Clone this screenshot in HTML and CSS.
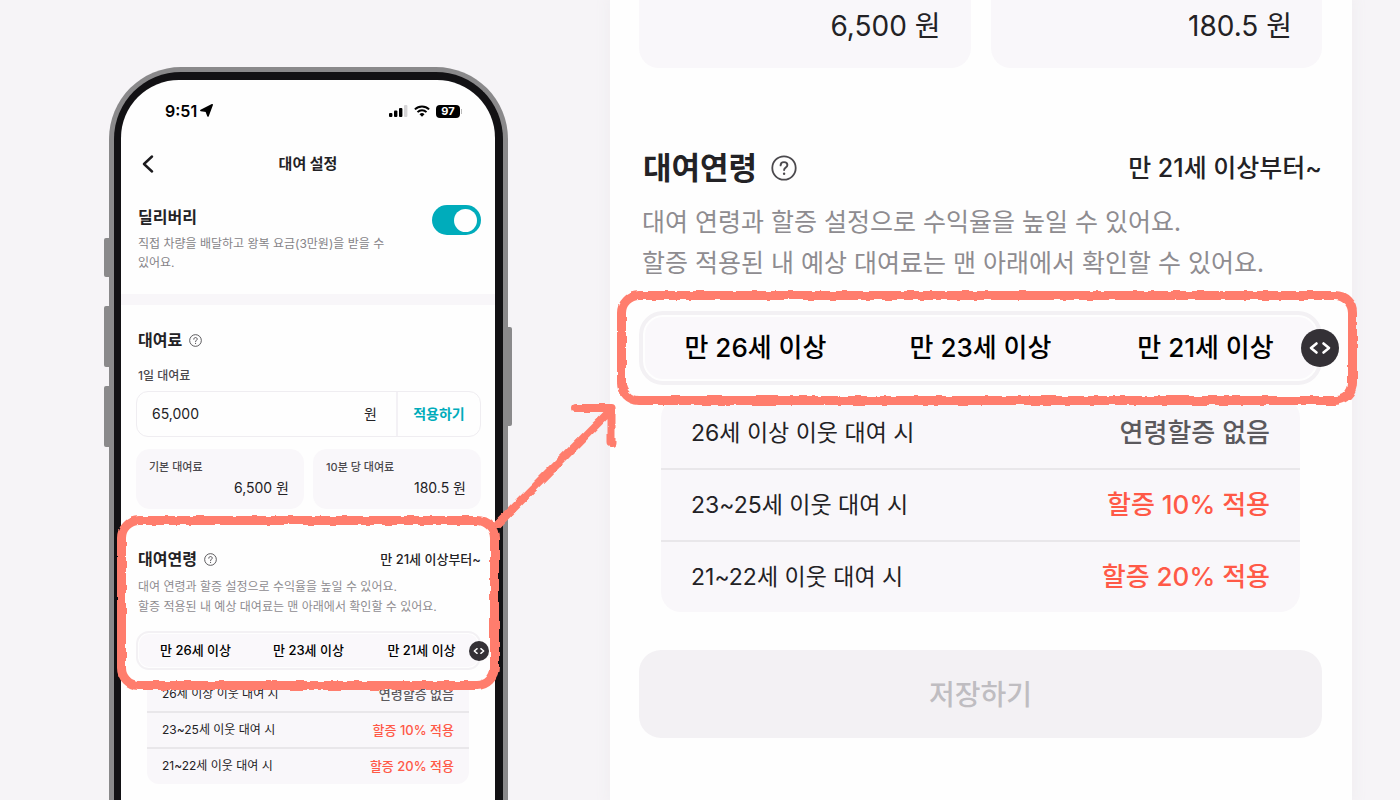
FILE: index.html
```html
<!DOCTYPE html>
<html lang="ko">
<head>
<meta charset="utf-8">
<meta name="viewport" content="width=device-width, initial-scale=1">
<title>대여 설정</title>
<link rel="stylesheet" href="styles.css">
</head>
<body>
<svg class="defs" aria-hidden="true">
  <filter id="rough" x="-5%" y="-5%" width="110%" height="110%" color-interpolation-filters="sRGB">
    <feTurbulence type="fractalNoise" baseFrequency="0.09" numOctaves="2" seed="4"/>
    <feDisplacementMap in="SourceGraphic" scale="4" xChannelSelector="R" yChannelSelector="G"/>
  </filter>
  <symbol id="help" viewBox="0 0 26 26">
    <circle cx="13" cy="13" r="11.7" fill="none" stroke="currentColor" stroke-width="1.8"/>
    <path d="M9.6 10.4c0-2.1 1.5-3.3 3.4-3.3s3.4 1.2 3.4 3c0 2.400-3.300 2.500-3.300 5" fill="none" stroke="currentColor" stroke-width="1.900" stroke-linecap="round"/>
    <circle cx="13.100" cy="18.700" r="1.200" fill="currentColor"/>
  </symbol>
</svg>

<main class="scene">
  <section class="phone">
    <i class="key key-mute"></i><i class="key key-up"></i><i class="key key-down"></i><i class="key key-power"></i>
    <div class="screen">
      <div class="status">
        <div class="status-time">9:51
          <svg width="13" height="13" viewBox="0 0 13 13"><path d="M12.200.8 8 12 6.200 7.300.9 6.500Z" fill="#000" stroke="#000" stroke-width="1.600" stroke-linejoin="round"/></svg>
        </div>
        <div class="status-icons">
          <svg width="19" height="12" viewBox="0 0 19 12"><rect x="0" y="8" width="3.400" height="4" rx="1"/><rect x="5" y="5.500" width="3.400" height="6.500" rx="1"/><rect x="10" y="3" width="3.400" height="9" rx="1"/><rect x="15" y="0" width="3.400" height="12" rx="1" fill="#d5d4d6"/></svg>
          <svg width="16" height="12" viewBox="0 0 16 12"><g fill="none" stroke="#000" stroke-width="2"><path d="M.9 4.400a10.200 10.200 0 0 1 14.200 0"/><path d="M3.500 7.100a6.500 6.500 0 0 1 9 0"/></g><path d="M8 11.800 5.500 9.200a3.600 3.600 0 0 1 5 0Z"/></svg>
          <span class="battery">97</span>
        </div>
      </div>
      <header class="nav">
        <button class="back" aria-label="뒤로"><svg width="12" height="18" viewBox="0 0 12 18"><path d="M10 1.500 2 9l8 7.500" fill="none" stroke="#1b1a1d" stroke-width="2.400" stroke-linecap="round" stroke-linejoin="round"/></svg></button>
        <h1>대여 설정</h1>
      </header>

      <section class="delivery">
        <div>
          <h2><label for="delivery">딜리버리</label></h2>
          <p>직접 차량을 배달하고 왕복 요금(3만원)을 받을 수 있어요.</p>
        </div>
        <input class="toggle" type="checkbox" id="delivery" checked>
      </section>

      <section class="fee">
        <h2>대여료 <svg class="help"><use href="#help"/></svg></h2>
        <label class="fee-label" for="daily">1일 대여료</label>
        <div class="fee-field">
          <input id="daily" type="text" value="65,000"><span class="unit">원</span>
          <button>적용하기</button>
        </div>
        <div class="cards">
          <div class="card"><span>기본 대여료</span><strong>6,500 원</strong></div>
          <div class="card"><span>10분 당 대여료</span><strong>180.5 원</strong></div>
        </div>
      </section>

      <section class="age">
        <div class="age-head">
          <h2>대여연령 <svg class="help"><use href="#help"/></svg></h2>
          <span class="age-from">만 21세 이상부터~</span>
        </div>
        <p class="age-desc">대여 연령과 할증 설정으로 수익율을 높일 수 있어요.<br>할증 적용된 내 예상 대여료는 맨 아래에서 확인할 수 있어요.</p>
        <div class="slider">
          <span>만 26세 이상</span><span>만 23세 이상</span><span>만 21세 이상</span>
          <input type="range" min="0" max="2" value="2" aria-label="대여연령">
        </div>
        <i class="mark"></i>
      </section>

      <table class="rates">
        <tr><th scope="row">26세 이상 이웃 대여 시</th><td>연령할증 없음</td></tr>
        <tr><th scope="row">23~25세 이웃 대여 시</th><td class="extra">할증 10% 적용</td></tr>
        <tr><th scope="row">21~22세 이웃 대여 시</th><td class="extra">할증 20% 적용</td></tr>
      </table>
    </div>
  </section>

  <section class="detail">
    <div class="cards">
      <div class="card"><strong>6,500 원</strong></div>
      <div class="card"><strong>180.5 원</strong></div>
    </div>
    <section class="age">
      <div class="age-head">
        <h2>대여연령 <svg class="help"><use href="#help"/></svg></h2>
        <span class="age-from">만 21세 이상부터~</span>
      </div>
      <p class="age-desc">대여 연령과 할증 설정으로 수익율을 높일 수 있어요.<br>할증 적용된 내 예상 대여료는 맨 아래에서 확인할 수 있어요.</p>
      <div class="slider">
        <span>만 26세 이상</span><span>만 23세 이상</span><span>만 21세 이상</span>
        <input type="range" min="0" max="2" value="2" aria-label="대여연령">
        <i class="mark"></i>
      </div>
    </section>
    <table class="rates">
      <tr><th scope="row">26세 이상 이웃 대여 시</th><td>연령할증 없음</td></tr>
      <tr><th scope="row">23~25세 이웃 대여 시</th><td class="extra">할증 10% 적용</td></tr>
      <tr><th scope="row">21~22세 이웃 대여 시</th><td class="extra">할증 20% 적용</td></tr>
    </table>
    <button class="save" disabled>저장하기</button>
  </section>

  <svg class="arrow" viewBox="0 0 130 134" aria-hidden="true"><path d="M8 126 120 13M86 10h35.500v35" fill="none" stroke="#ff7d6d" stroke-width="8" stroke-linecap="round" stroke-linejoin="round"/></svg>
</main>
</body>
</html>
```
FILE: styles.css
```css
* { box-sizing: border-box; }

body {
  margin: 0;
  background: #f6f4f7;
  color: #232225;
  font-family: Inter, "Noto Sans CJK KR", sans-serif;
  line-height: 1.4;
  -webkit-font-smoothing: antialiased;
}

h1, h2, p { margin: 0; }
button, input { font: inherit; color: inherit; border: 0; padding: 0; background: none; margin: 0; }
.defs { position: absolute; width: 0; height: 0; }

.scene {
  position: relative;
  display: grid;
  grid-template-columns: minmax(0, 399fr) minmax(0, 742fr);
  column-gap: 102px;
  height: 100vh;
  min-height: 800px;
  padding: 0 48px 0 109px;
  overflow: hidden;
}

/* Phone frame */
.phone {
  position: relative;
  margin-top: 67px;
  border: 5px solid #8a898b;
  border-bottom: 0;
  border-radius: 72px 72px 0 0;
  padding: 8px 8px 0 7px;
  background: #121114;
}
.key { position: absolute; width: 5px; left: -10px; background: #8a898b; border-radius: 2px 0 0 2px; }
.key-mute { top: 166px; height: 39px; }
.key-up { top: 234px; height: 61px; }
.key-down { top: 314px; height: 61px; }
.key-power { top: 255px; height: 99px; left: auto; right: -9px; border-radius: 0 2px 2px 0; }
.screen { height: 100%; background: #fefefe; border-radius: 58px 58px 0 0; }

.status {
  display: flex;
  justify-content: space-between;
  align-items: center;
  height: 62px;
  padding: 0 35px 0 44px;
  color: #000;
  font-size: 16px;
  font-weight: 600;
}
.status-time, .status-icons { display: flex; align-items: center; }
.status-time { gap: 3px; }
.status-icons { gap: 6px; }
.battery {
  position: relative;
  width: 24px;
  height: 13px;
  border-radius: 4px;
  background: #000;
  color: #fff;
  font-size: 11px;
  font-weight: 700;
  line-height: 13px;
  text-align: center;
}
.battery::after {
  content: "";
  position: absolute;
  right: -2px;
  top: 4px;
  width: 1px;
  height: 5px;
  background: #bbb;
}

.nav { display: grid; grid-template-columns: 32px 1fr 32px; align-items: center; height: 44px; padding: 0 11px; text-align: center; }
.nav h1 { font-size: 15px; line-height: 24px; font-weight: 700; }
.back { display: grid; place-items: center; height: 32px; }

.screen h2 { display: flex; align-items: center; gap: 7px; padding-left: 2px; font-size: 16px; line-height: 24px; font-weight: 700; }
.help { width: 13px; height: 13px; color: #4b494d; }

.delivery {
  display: flex;
  justify-content: space-between;
  padding: 19px 14px 22px 15px;
  border-bottom: 11px solid #f8f6f9;
}
.delivery p { max-width: 264px; margin-top: 5px; padding-left: 2px; color: #858387; font-size: 12px; line-height: 19px; word-break: keep-all; }
.toggle { appearance: none; flex: none; width: 49px; height: 30px; border-radius: 15px; background: #00acbb; }
.toggle::before { content: ""; display: block; width: 23px; height: 23px; margin: 4px 0 0 22px; border-radius: 50%; background: #fefefe; }

.fee { padding: 23px 14px 0 15px; }
.fee-label { display: block; margin: 14px 0 5px; padding-left: 2px; font-size: 12px; line-height: 20px; font-weight: 500; color: #4b494d; }
.fee-field { display: flex; align-items: stretch; height: 46px; border: 1px solid #efedf1; border-radius: 12px; font-size: 14px; }
.fee-field input { flex: 1; min-width: 0; padding-left: 15px; }
.unit { align-self: center; padding-right: 19px; }
.fee-field button { width: 84px; border-left: 2px solid #f3f1f5; color: #00acbb; font-weight: 700; }

.cards { display: grid; grid-template-columns: 1fr 1fr; gap: 9px; margin-top: 12px; }
.card { display: flex; flex-direction: column; height: 60px; padding: 9px 15px 0 13px; border-radius: 14px; background: #f9f7fa; }
.card span { font-size: 11px; line-height: 18px; font-weight: 500; color: #4b494d; }
.card strong { align-self: flex-end; font-size: 14px; line-height: 24px; font-weight: 400; }

/* Rental age */
.age { position: relative; z-index: 1; padding: 38px 14px 16px 15px; background: #fefefe; }
.age-head { display: flex; justify-content: space-between; align-items: center; }
.age-from { font-size: 13px; font-weight: 500; }
.age-desc { margin: 6px 0 14px; padding-left: 2px; color: #8e8c90; font-size: 12px; line-height: 20px; white-space: nowrap; }
.slider {
  position: relative;
  display: grid;
  grid-template-columns: repeat(3, 1fr);
  align-items: center;
  height: 39px;
  padding: 0 1px;
  border: 2px solid #f3f1f4;
  border-radius: 13px;
  background: #faf8fb;
  box-shadow: inset 0 0 0 1px #fefefe;
  color: #000;
  font-size: 13px;
  font-weight: 500;
  text-align: center;
}
.slider input { appearance: none; position: absolute; top: 0; bottom: 0; left: -10px; right: -10px; }
.slider input::-webkit-slider-thumb {
  appearance: none;
  width: 20px;
  height: 20px;
  border-radius: 50%;
  background: #343136 url("data:image/svg+xml,%3Csvg xmlns='http://www.w3.org/2000/svg' viewBox='0 0 38 38'%3E%3Cpath d='M15.500 14.500 10 19l5.500 4.500M22.500 14.500 28 19l-5.500 4.500' fill='none' stroke='white' stroke-width='2.600' stroke-linecap='round' stroke-linejoin='round'/%3E%3C/svg%3E") center / contain;
}

.mark {
  position: absolute;
  inset: 7px -4px -4px;
  border: 9px solid #ff7d6d;
  border-radius: 22px;
  filter: url(#rough);
  pointer-events: none;
}

.rates { width: calc(100% - 52px); margin: -9px 26px 0; border-spacing: 0; border-radius: 12px; background: #f9f7fa; }
.rates th, .rates td { height: 36px; padding: 0 15px; border-bottom: 2px solid #e9e7ea; }
.rates th { font-size: 12px; font-weight: 400; text-align: left; }
.rates td { font-size: 13px; font-weight: 500; text-align: right; color: #5b595d; }
.rates tr:last-child > * { height: 35px; border-bottom: 0; }
.rates .extra { color: #ff5947; }

/* Enlarged view of the same form */
.detail { padding: 0 30px 0 29px; background: #fefefe; box-shadow: 0 0 12px 4px #f1eff2; }
.detail .cards { gap: 20px; margin-top: 0; }
.detail .card { height: 68px; padding: 6px 30px 0; border-radius: 0 0 20px 20px; }
.detail .card strong { font-size: 28px; line-height: 40px; }
.detail .age { padding: 80px 0 15px; }
.detail h2 { display: flex; align-items: center; gap: 14px; padding-left: 4px; font-size: 31px; line-height: 40px; font-weight: 700; }
.detail .help { width: 26px; height: 26px; }
.detail .age-from { font-size: 25px; }
.detail .age-desc { margin: 12px 0 29px; padding-left: 3px; font: 25px/41px "Noto Sans CJK KR", sans-serif; }
.detail .slider { height: 74px; padding: 0; border-width: 4px; border-radius: 24px; box-shadow: inset 0 0 0 2px #fefefe; font-size: 26px; }
.detail .slider input { left: -21px; right: -21px; }
.detail .slider input::-webkit-slider-thumb { width: 38px; height: 38px; }
.detail .mark { inset: -24px -39px -24px -26px; }
.detail .rates { width: calc(100% - 44px); margin: -2px 22px 0; border-radius: 20px; }
.detail .rates th, .detail .rates td { height: 72px; padding: 0 30px; }
.detail .rates tr:last-child > * { height: 70px; }
.detail .rates th { font-size: 23px; }
.detail .rates td { font-size: 26px; }
.save { display: block; width: 100%; height: 88px; margin-top: 38px; padding-top: 4px; border-radius: 22px; background: #f3f1f4; color: #bfbdc1; font-size: 28px; font-weight: 500; }

.arrow { position: absolute; z-index: 2; left: 35%; top: 398px; width: 130px; height: 134px; filter: url(#rough); }
```
